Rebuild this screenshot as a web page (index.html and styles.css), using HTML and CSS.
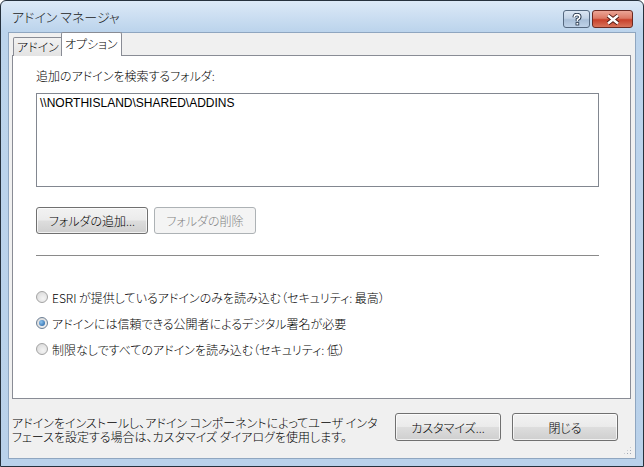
FILE: index.html
```html
<!DOCTYPE html>
<html lang="ja">
<head>
    <meta charset="UTF-8">
    <title>アドイン マネージャ</title>
    <link rel="stylesheet" href="styles.css">
</head>
<body>
    <div class="window">
        <div class="titlebar">
            <span class="title">アドイン マネージャ</span>
            <div class="caption-buttons">
                <div class="cap help">
                    <svg width="12" height="13" viewBox="0 0 12 13">
                        <path d="M3.2 4.2 Q3.2 1.6 6 1.6 Q8.8 1.6 8.8 4 Q8.8 5.6 6.4 6.6 L6.4 8.2" fill="none" stroke="#1e2f45" stroke-width="3.4"/>
                        <path d="M3.2 4.2 Q3.2 1.6 6 1.6 Q8.8 1.6 8.8 4 Q8.8 5.6 6.4 6.6 L6.4 8.2" fill="none" stroke="#fff" stroke-width="1.6"/>
                        <rect x="5" y="9.6" width="2.8" height="2.4" fill="#fff" stroke="#1e2f45" stroke-width="0.8"/>
                    </svg>
                </div>
                <div class="cap close">
                    <svg width="16" height="11" viewBox="0 0 16 11">
                        <path d="M3 1.5 L13 9.5 M13 1.5 L3 9.5" stroke="#4d1710" stroke-width="4.2"/>
                        <path d="M3 1.5 L13 9.5 M13 1.5 L3 9.5" stroke="#fff" stroke-width="2.4"/>
                    </svg>
                </div>
            </div>
        </div>

        <div class="client">
            <div class="tabs">
                <div class="tab">アドイン</div>
                <div class="tab active">オプション</div>
            </div>

            <div class="panel">
                <div class="label">追加のアドインを検索するフォルダ:</div>
                <div class="listbox">
                    <div class="item">\\NORTHISLAND\SHARED\ADDINS</div>
                </div>

                <div class="button-row">
                    <button class="btn add">フォルダの追加...</button>
                    <button class="btn remove" disabled>フォルダの削除</button>
                </div>

                <div class="separator"></div>

                <div class="options">
                    <label class="option"><span class="radio"></span>ESRI が提供しているアドインのみを読み込む（セキュリティ: 最高）</label>
                    <label class="option"><span class="radio checked"></span>アドインには信頼できる公開者によるデジタル署名が必要</label>
                    <label class="option"><span class="radio"></span>制限なしですべてのアドインを読み込む（セキュリティ: 低）</label>
                </div>
            </div>

            <div class="footer">
                <div class="hint">
                    <div class="hint-line">アドインをインストールし、アドイン コンポーネントによってユーザ インタ</div>
                    <div class="hint-line">フェースを設定する場合は、カスタマイズ ダイアログを使用します。</div>
                </div>
                <button class="btn footer-btn">カスタマイズ...</button>
                <button class="btn footer-btn">閉じる</button>
            </div>

            <div class="grip"></div>
        </div>
    </div>
</body>
</html>
```
FILE: styles.css
```css
body {
    margin: 0;
    padding: 0;
    background: #ffffff;
    font-family: "Noto Sans CJK JP", "Liberation Sans", sans-serif;
    font-size: 12px;
    font-weight: 300;
    color: #000;
}

.window {
    position: relative;
    width: 644px;
    height: 467px;
    box-sizing: border-box;
    border: 1px solid #26313d;
    border-radius: 6px 6px 0 0;
    background: linear-gradient(to bottom, #dce9f7 0px, #bcd4ec 30px, #b9d1ea 100%);
    display: flex;
    flex-direction: column;
}

/* Title bar */
.titlebar {
    height: 31px;
    display: flex;
    align-items: flex-start;
    justify-content: space-between;
}

.title {
    margin: 8px 0 0 11px;
    font-size: 13px;
    line-height: 16px;
    color: #1b1b1b;
    font-feature-settings: "palt";
}

.caption-buttons {
    display: flex;
    gap: 2px;
    margin: 9px 10px 0 0;
}

.cap {
    height: 18px;
    box-sizing: border-box;
    border: 1px solid #55687f;
    border-radius: 3px;
    display: flex;
    align-items: center;
    justify-content: center;
}

.cap.help {
    width: 27px;
    background: linear-gradient(to bottom, #dbe6f3 0%, #c3d3e6 45%, #a9bfd8 55%, #bfd2e8 100%);
}

.cap.close {
    width: 41px;
    border-color: #6b2a22;
    background: linear-gradient(to bottom, #eca596 0%, #dc7a66 45%, #c8402a 55%, #d8745b 100%);
}

/* Client area */
.client {
    position: relative;
    flex: 1;
    margin: 0 7px 7px 7px;
    border: 1px solid #8fa6c0;
    background: #f0f0f0;
    padding: 0 4px 0 3px;
    display: flex;
    flex-direction: column;
}

.tabs {
    display: flex;
    align-items: flex-end;
    height: 23px;
    padding-left: 1px;
    margin-bottom: -1px;
    position: relative;
    z-index: 1;
}

.tab {
    height: 19px;
    box-sizing: border-box;
    padding: 0 3px;
    border: 1px solid #898c95;
    border-bottom: none;
    border-radius: 2px 2px 0 0;
    background: linear-gradient(to bottom, #f2f2f2, #e3e3e3);
    line-height: 18px;
    font-feature-settings: "palt";
}

.tab.active {
    height: 24px;
    padding: 0 3px;
    margin-left: -2px;
    background: #ffffff;
    line-height: 22px;
}

.panel {
    height: 344px;
    box-sizing: border-box;
    border: 1px solid #898c95;
    background: #ffffff;
    padding: 12px 31px 0 23px;
}

.label {
    line-height: 16px;
    font-feature-settings: "palt";
}

.listbox {
    margin-top: 9px;
    height: 94px;
    box-sizing: border-box;
    border: 1px solid #828790;
    padding: 2px 3px;
}

.item {
    font-family: "Liberation Sans", sans-serif;
    font-weight: 400;
    font-size: 12px;
    line-height: 14px;
}

.button-row {
    display: flex;
    gap: 6px;
    margin-top: 20px;
}

.btn {
    height: 27px;
    box-sizing: border-box;
    border: 1px solid #707070;
    border-radius: 3px;
    background: linear-gradient(to bottom, #f2f2f2 0%, #ebebeb 48%, #dddddd 52%, #cfcfcf 100%);
    font-family: inherit;
    font-weight: inherit;
    font-size: 12px;
    color: #000;
    padding: 0;
    font-feature-settings: "palt";
    box-shadow: inset 0 0 0 1px rgba(255, 255, 255, 0.7);
}

.btn.add {
    width: 112px;
}

.btn.remove {
    width: 102px;
}

.btn:disabled {
    border-color: #adb2b5;
    background: #f4f4f4;
    color: #838383;
    box-shadow: none;
}

.separator {
    margin-top: 21px;
    height: 1px;
    background: #8a8a8a;
}

.options {
    margin-top: 28px;
    display: flex;
    flex-direction: column;
}

.option {
    height: 26px;
    display: flex;
    align-items: center;
    gap: 4px;
    font-feature-settings: "palt";
}

.radio {
    width: 12px;
    height: 12px;
    box-sizing: border-box;
    margin-left: 0;
    border-radius: 50%;
    border: 1px solid #a3a3a3;
    background: radial-gradient(circle at 60% 65%, #f4f4f4, #d6d6d6);
    display: flex;
    align-items: center;
    justify-content: center;
}

.radio.checked {
    border-color: #6c7f95;
}

.radio.checked::after {
    content: "";
    width: 6px;
    height: 6px;
    border-radius: 50%;
    background: radial-gradient(circle at 35% 35%, #8cc4f0, #1f5c9e);
}

/* Footer */
.footer {
    flex: 1;
    display: flex;
    align-items: flex-start;
    padding: 14px 13px 0 0;
}

.hint {
    flex: 1;
    margin-top: 3px;
    font-feature-settings: "palt";
}

.hint-line {
    height: 14px;
    line-height: 14px;
}

.footer-btn {
    width: 106px;
    height: 28px;
    margin-left: 11px;
}

.grip {
    position: absolute;
    right: 3px;
    bottom: 3px;
    width: 9px;
    height: 9px;
    background:
        radial-gradient(circle, #a0a8b4 0.8px, transparent 1px) 0 0 / 3px 3px;
    clip-path: polygon(100% 0, 100% 100%, 0 100%);
}
```
